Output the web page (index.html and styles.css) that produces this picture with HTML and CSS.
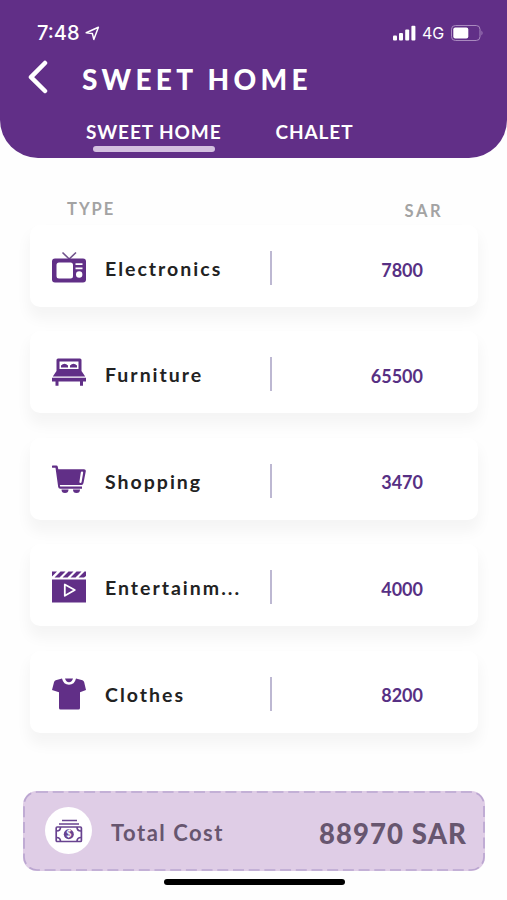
FILE: index.html
```html
<!DOCTYPE html>
<html lang="en">

<head>
    <meta charset="UTF-8">
    <meta name="viewport" content="width=device-width, initial-scale=1.0">
    <title>Sweet Home</title>
    <link rel="stylesheet" href="styles.css">
</head>

<body>
    <header class="header">
        <div class="status-bar">
            <span class="time">7:48</span>
            <svg class="location" width="15" height="15" viewBox="0 0 15 15">
                <path d="M1.2 6.8 13.4 1.2 8.8 13.4 7.4 7.6Z" />
            </svg>
            <svg class="signal" width="23" height="16" viewBox="0 0 23 16">
                <rect x="0" y="10.5" width="4" height="5" rx="1" />
                <rect x="6" y="8" width="4" height="7.5" rx="1" />
                <rect x="12.2" y="4.5" width="4" height="11" rx="1" />
                <rect x="18.4" y="0.8" width="4" height="14.7" rx="1" />
            </svg>
            <span class="network">4G</span>
            <svg class="battery" width="33" height="16" viewBox="0 0 33 16">
                <rect class="battery-case" x="0.5" y="0.5" width="28.5" height="15" rx="3.8" />
                <rect x="2.3" y="2.5" width="15" height="11" rx="2" />
                <path class="battery-tip" d="M30.5 5.5q2 2.5 0 5Z" />
            </svg>
        </div>
        <div class="title-bar">
            <svg class="back" width="20" height="34" viewBox="0 0 20 34">
                <path d="M17 3 3 17.2 17 31" />
            </svg>
            <h1>SWEET HOME</h1>
        </div>
        <nav class="tabs">
            <a class="tab active">SWEET HOME</a>
            <a class="tab">CHALET</a>
        </nav>
    </header>

    <main>
        <div class="list-head">
            <span>TYPE</span>
            <span class="currency">SAR</span>
        </div>

        <div class="list">
            <div class="card">
                <svg class="icon" viewBox="0 0 34 34">
                    <path class="antenna" d="m10.5 1.5 6.7 6.5L24 1.5" />
                    <path fill-rule="evenodd" d="M3 7.5h28a3 3 0 0 1 3 3V28.5a3 3 0 0 1-3 3H3a3 3 0 0 1-3-3V10.5a3 3 0 0 1 3-3ZM7 11.5a2.5 2.5 0 0 0-2.5 2.5v11A2.5 2.5 0 0 0 7 27.5h11.5a2.5 2.5 0 0 0 2.5-2.5V14a2.5 2.5 0 0 0-2.5-2.500ZM23.500 12.300v1.700h7v-1.700ZM23.500 16.500v1.700h7v-1.700ZM27.200 20.300a3.200 3.200 0 1 0 0 6.400 3.200 3.200 0 0 0 0-6.400Z" />
                </svg>
                <span class="name">Electronics</span>
                <span class="divider"></span>
                <span class="amount">7800</span>
            </div>
            <div class="card">
                <svg class="icon" viewBox="0 0 34 34">
                    <path fill-rule="evenodd" d="M6 1.500h22a1.500 1.500 0 0 1 1.500 1.500v11l3.700 5.500H.8l3.700-5.500V3A1.500 1.500 0 0 1 6 1.500ZM7.500 4.500v7.500h19V4.500Z" />
                    <path d="M9 10.500V8.500Q12.500 5 16 8.500V10.500ZM18 10.500V8.500q3.500-3.500 7 0V10.500ZM0 20.800h34v3.700h-3v4.200h-3v-4.200H6.500v4.200H3.500v-4.200H0Z" />
                </svg>
                <span class="name">Furniture</span>
                <span class="divider"></span>
                <span class="amount">65500</span>
            </div>
            <div class="card">
                <svg class="icon" viewBox="0 0 34 34">
                    <path fill-rule="evenodd" d="M.8 1.500h3.500q1.200 0 1.500 1.200L6.300 5.200H32q2 0 1.800 2L31.500 19q-.4 2-2 2H7.800l.4 1.500H30V24.800H8.200q-1.700 0-2-1.700L3.500 3.800H.8A1 1 0 0 1 .8 1.500ZM30 7.500q-1 0-1.200 1l-1.400 9.500q0 1 1 1t1.200-1l1.600-9.500q0-1-1.200-1Z" />
                    <path d="M9.500 25.500h7a3.500 3.500 0 1 1-7 0ZM21 25.500h7a3.500 3.500 0 1 1-7 0Z" />
                </svg>
                <span class="name">Shopping</span>
                <span class="divider"></span>
                <span class="amount">3470</span>
            </div>
            <div class="card">
                <svg class="icon" viewBox="0 0 34 34">
                    <path d="M0 1.500h5L0 6.500ZM8.500 1.500h5L7.500 7.500h-5ZM16.500 1.500h5l-6 6h-5ZM24.500 1.500h5l-6 6h-5ZM32.500 1.500H34V6l-2 1.500h-5.500ZM0 9.500h34v23H0Z" />
                    <path class="play" d="M12.800 14.500v11.300L22.800 20Z" />
                </svg>
                <span class="name">Entertainm...</span>
                <span class="divider"></span>
                <span class="amount">4000</span>
            </div>
            <div class="card">
                <svg class="icon" viewBox="0 0 34 34">
                    <path d="M10 1.500Q11.500 7.700 17 7.700T24 1.500l6.500 1.700q1.200.6 1.700 2L34 13 28 15.200V31q0 1.500-1.500 1.500h-18Q7 32.500 7 31V15.200L0 13 2 5.200q.4-1.500 1.700-2Z" />
                    <path d="M13 1.500h8q-1 3.700-4 3.700t-4-3.700Z" />
                </svg>
                <span class="name">Clothes</span>
                <span class="divider"></span>
                <span class="amount">8200</span>
            </div>
        </div>
    </main>

    <footer class="total">
        <!-- dashed outline follows the rounded box -->
        <svg class="outline" width="462" height="80">
            <rect x="1" y="1" width="460" height="78" rx="13" />
        </svg>
        <div class="badge">
            <svg width="28" height="24" viewBox="0 0 28 24">
                <path d="M7 1.5h15M4 5h20" />
                <rect x="1.2" y="8" width="25.2" height="14.5" rx="1" />
                <path d="M1.5 12Q5.5 12 5.5 8M22 8q0 4 4 4M1.5 18.5q4 0 4 4M22 22.5q0-4 4-4" />
                <circle class="coin" cx="13.8" cy="15.2" r="5" />
                <text x="13.8" y="18.4">$</text>
            </svg>
        </div>
        <span class="total-label">Total Cost</span>
        <span class="total-amount">88970 SAR</span>
    </footer>
    <div class="home-indicator"></div>
</body>

</html>
```
FILE: styles.css
```css
:root {
    --primary: #612f87;
    --text: #222;
    --muted: #a3a3a3;
    --white: #ffffff;
    --total-bg: #dfcde6;
    --total-text: #67566f;
}

* {
    margin: 0;
    padding: 0;
    box-sizing: border-box;
}

body {
    height: 900px;
    overflow: hidden;
    background: #fefefe;
    color: var(--text);
    font-family: Lato, sans-serif;
    font-weight: 700;
}

.header {
    height: 158px;
    background: var(--primary);
    color: var(--white);
    border-radius: 0 0 38px 38px;
}

.status-bar {
    display: flex;
    align-items: center;
    height: 50px;
    padding: 16px 23px 0 37px;
    font-family: Inter, sans-serif;
    fill: var(--white);
}

.time {
    width: 44px;
    font-size: 20px;
    font-weight: 500;
}

.location {
    margin-left: 4px;
    fill: none;
    stroke: var(--white);
    stroke-width: 1.5;
    stroke-linejoin: round;
}

.signal {
    margin-left: auto;
}

.network {
    width: 22px;
    margin: 0 7px 0 6px;
    font-size: 16px;
    font-weight: 400;
}

.battery-case {
    fill: none;
    stroke: #a98abf;
}

.battery-tip {
    fill: #a98abf;
}

.title-bar {
    display: flex;
    align-items: center;
    height: 56px;
    padding-left: 28px;
}

.back {
    margin: -2px 34px 0 0;
    fill: none;
    stroke: var(--white);
    stroke-width: 4.5;
    stroke-linecap: round;
    stroke-linejoin: round;
}

h1 {
    padding-top: 1px;
    font-size: 28px;
    font-weight: 900;
    letter-spacing: 4.3px;
    white-space: nowrap;
}

.tabs {
    display: flex;
    gap: 54px;
    padding: 14px 0 0 86px;
    font-size: 19px;
    line-height: 24px;
    letter-spacing: 0.9px;
    white-space: nowrap;
}

.tab.active::after {
    content: '';
    display: block;
    width: 122px;
    height: 6px;
    margin: 2px 0 0 7px;
    border-radius: 3px;
    background: #d3c0df;
}

.list-head {
    display: flex;
    justify-content: space-between;
    height: 67px;
    padding: 41px 64px 0 67px;
    color: var(--muted);
    font-size: 16.5px;
    line-height: 20px;
    letter-spacing: 2px;
}

.currency {
    padding-top: 2px;
    letter-spacing: 2.5px;
}

.list {
    display: grid;
    gap: 24.4px;
    padding: 0 29px 0 30px;
}

.card {
    display: flex;
    align-items: center;
    height: 82px;
    padding: 4px 55px 0 22px;
    border-radius: 10px;
    background: var(--white);
    box-shadow: 0 10px 14px 2px rgba(0, 0, 0, 0.04);
}

.icon {
    width: 34px;
    height: 34px;
    margin-right: 19px;
    fill: var(--primary);
}

.antenna {
    fill: none;
    stroke: #71538c;
    stroke-width: 1.6;
}

.play {
    fill: none;
    stroke: var(--white);
    stroke-width: 1.8;
    stroke-linejoin: round;
}

.name {
    width: 140px;
    padding-top: 1px;
    font-size: 19.5px;
    letter-spacing: 2px;
    white-space: nowrap;
}

.divider {
    width: 2px;
    height: 34px;
    margin-left: 25px;
    background: #bdb8d2;
}

.amount {
    margin-left: auto;
    padding-top: 3px;
    color: #573084;
    font-size: 18px;
}

.total {
    position: relative;
    display: flex;
    align-items: center;
    width: 462px;
    height: 80px;
    margin: 58px 0 0 23px;
    padding: 0 18px 0 22px;
    border-radius: 14px;
    background: var(--total-bg);
    color: var(--total-text);
    white-space: nowrap;
}

.outline {
    position: absolute;
    top: 0;
    left: 0;
    fill: none;
    stroke: #bba6d1;
    stroke-width: 1.7;
    stroke-dasharray: 11 4.7;
}

.badge {
    display: grid;
    place-items: center;
    width: 47px;
    height: 47px;
    margin-right: 19px;
    border-radius: 50%;
    background: var(--white);
}

.badge svg {
    fill: none;
    stroke: #684390;
    stroke-width: 1.7;
}

.badge .coin {
    fill: #684390;
    stroke: none;
}

.badge text {
    fill: var(--white);
    stroke: none;
    font-size: 9px;
    text-anchor: middle;
}

.total-label {
    padding-top: 4px;
    font-size: 22px;
    letter-spacing: 1.5px;
}

.total-amount {
    margin-left: auto;
    padding-top: 5px;
    font-size: 27.5px;
    font-weight: 900;
    letter-spacing: 1.1px;
}

.home-indicator {
    width: 181px;
    height: 6px;
    margin: 8px 0 0 164px;
    border-radius: 3px;
    background: #000;
}
```
